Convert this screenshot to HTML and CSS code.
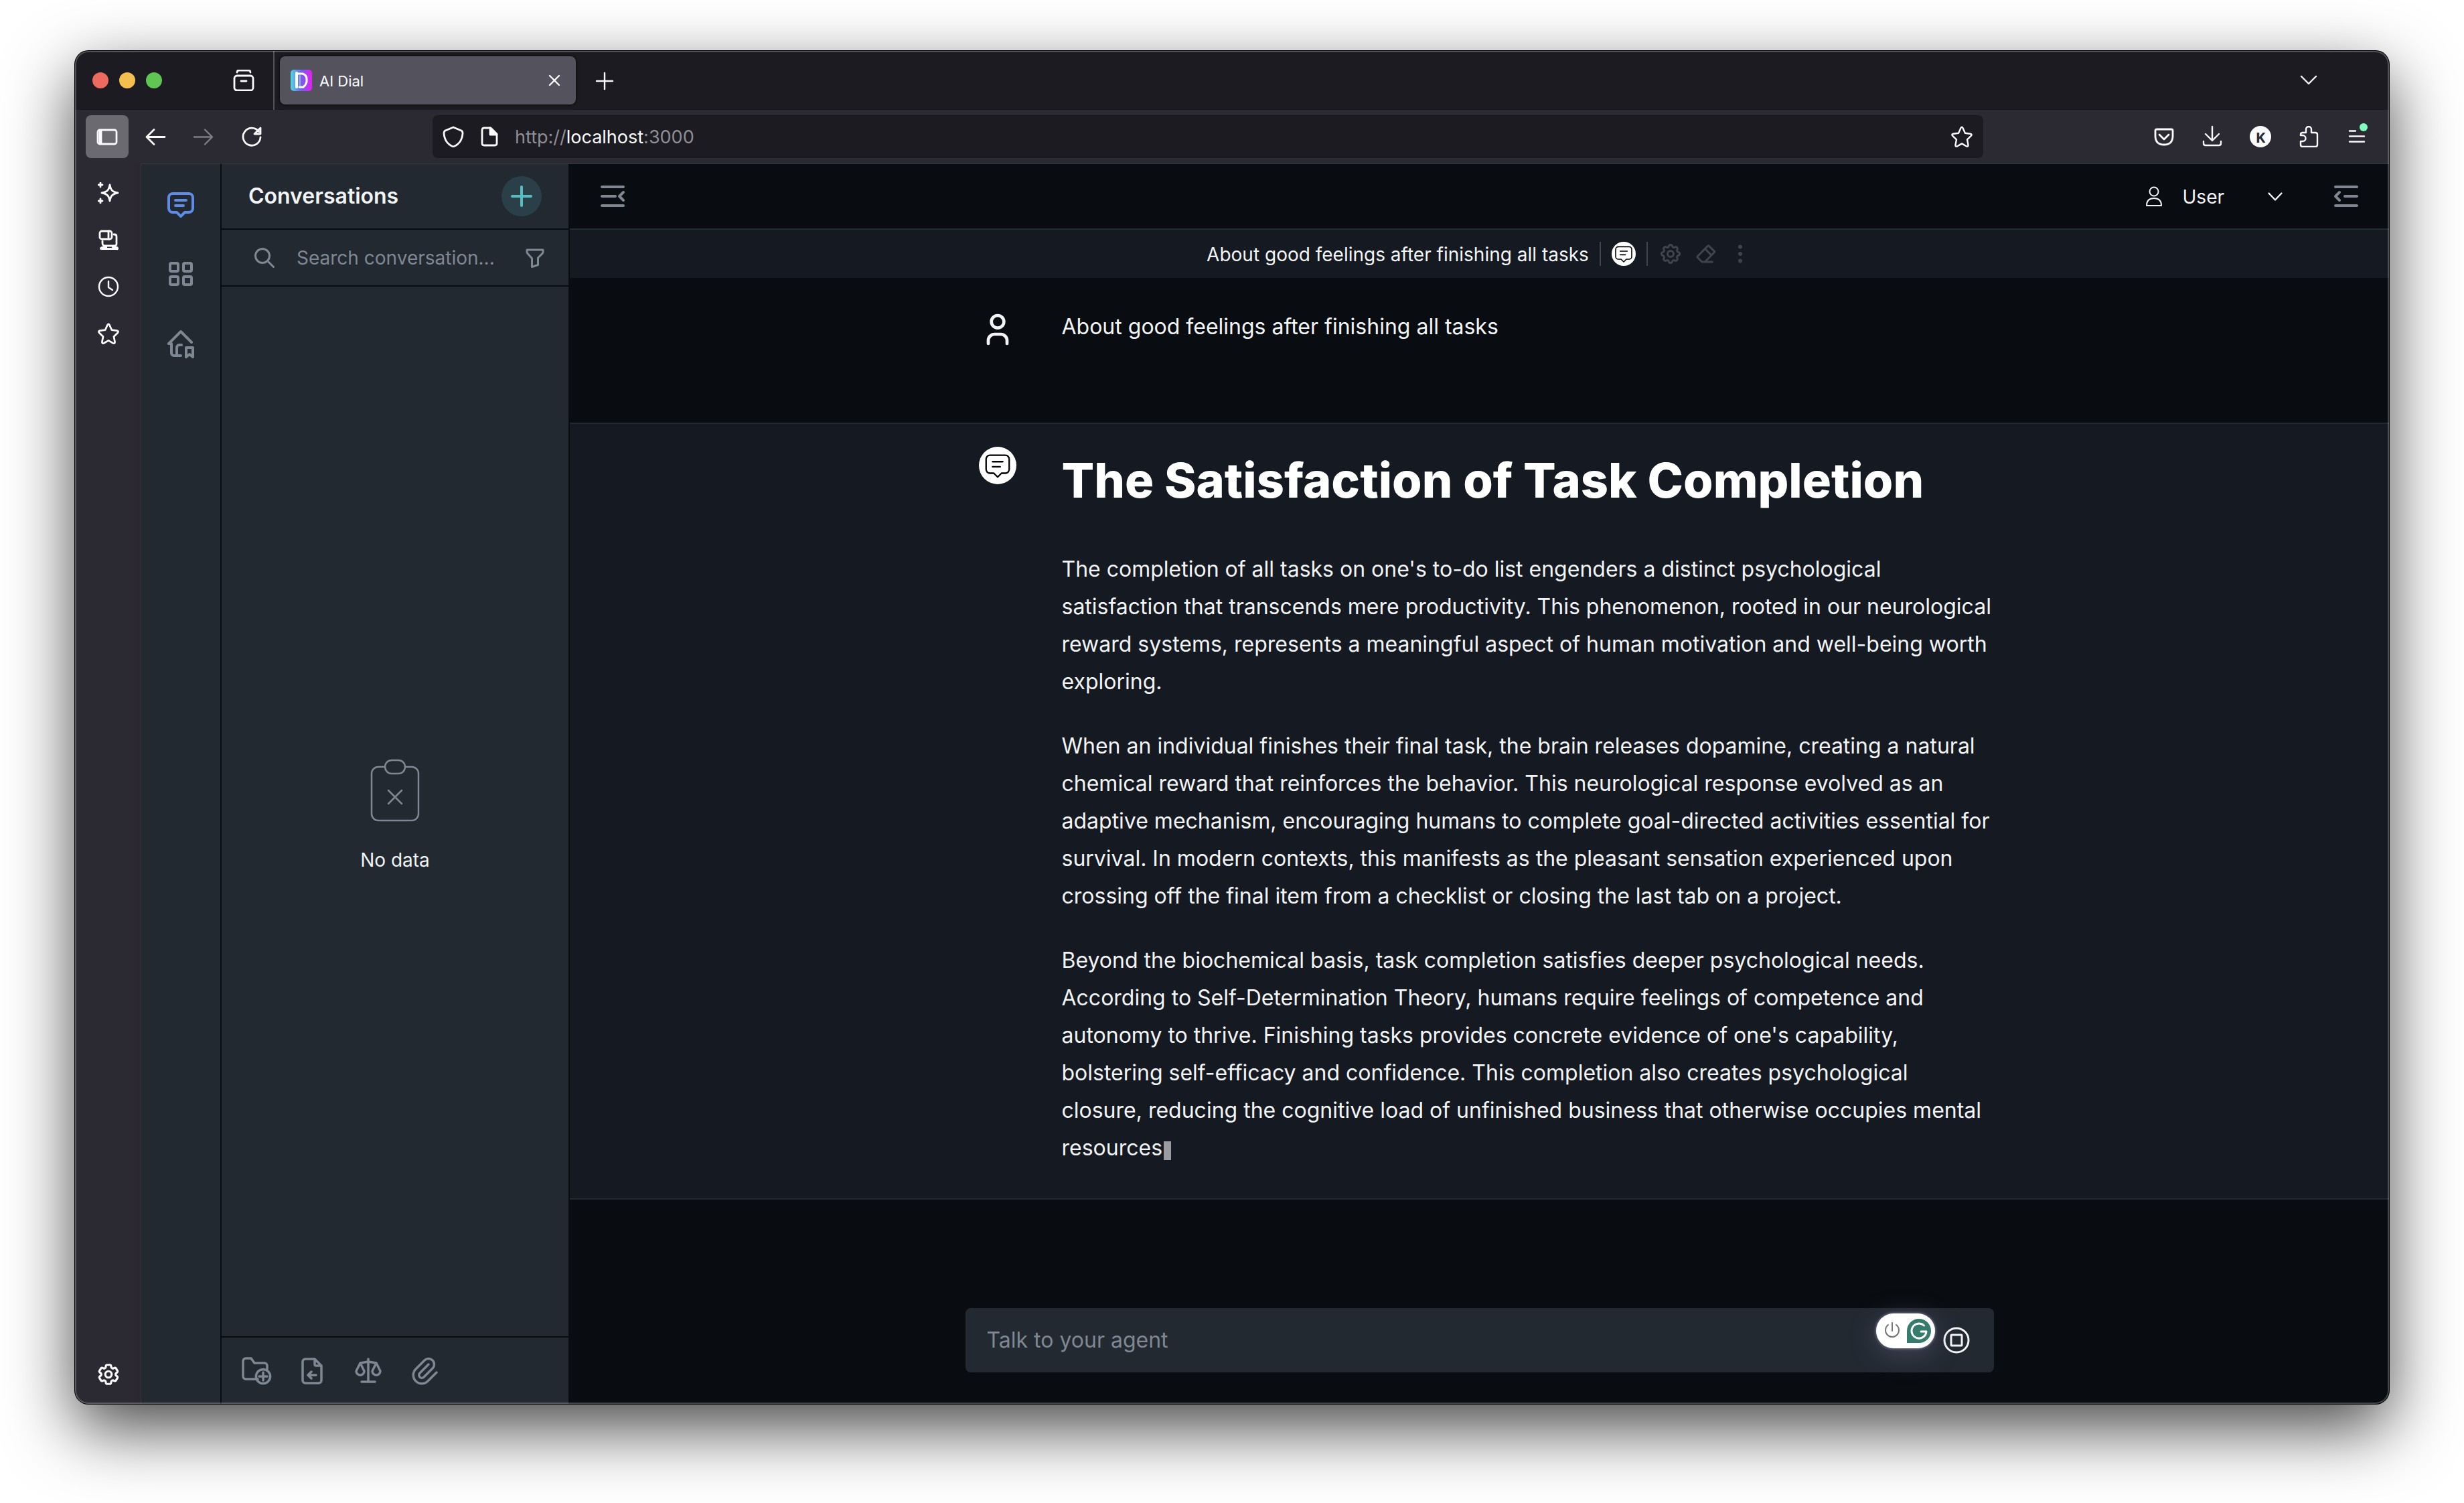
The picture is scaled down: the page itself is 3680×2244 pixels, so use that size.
FILE: index.html
```html
<!DOCTYPE html>
<html lang="en">
<head>
<meta charset="utf-8">
<title>AI Dial</title>
<link rel="stylesheet" href="styles.css">
</head>
<body>
<svg class="sprite" aria-hidden="true">
  <symbol id="message" viewBox="0 0 24 24"><path d="M8 9h8M8 13h6M9 18h-3a3 3 0 0 1-3-3v-8a3 3 0 0 1 3-3h12a3 3 0 0 1 3 3v8a3 3 0 0 1-3 3h-3l-3 3l-3-3z"/></symbol>
  <symbol id="star" viewBox="0 0 32 32"><path d="M14.4 3.3q1.6-3 3.2 0l3.3 7.4 7.8 1q3.2.8 1 3.2l-5.7 5.5 1.5 7.900q.2 3.200-2.800 2l-6.700-3.900-6.700 3.900q-3 1.200-2.800-2l1.500-7.900-5.700-5.500q-2.200-2.400 1-3.200l7.800-1z"/></symbol>
</svg>

<div class="window">
  <header class="tabstrip">
    <div class="lights"><button class="light red" aria-label="Close window"></button><button class="light amber" aria-label="Minimize"></button><button class="light green" aria-label="Zoom"></button></div>
    <button class="archive" aria-label="Recent browsing"><svg class="i32 w3" viewBox="0 0 32 32"><rect x="2" y="9" width="28" height="22" rx="4"/><path d="M6 4q0-3 3-3h14q3 0 3 3M12 17h8"/></svg></button>
    <span class="strip-line"></span>
    <div class="tab">
      <svg class="favicon" viewBox="0 0 32 32"><defs><linearGradient id="fav"><stop offset="0" stop-color="#4fd8e0"/><stop offset=".5" stop-color="#7360e8"/><stop offset="1" stop-color="#e81cf5"/></linearGradient></defs><rect width="32" height="32" rx="5" fill="url(#fav)"/><path d="M9 6h9q6 2 6 8v4q-1 5-5 8h-6" fill="none" stroke="#fff" stroke-width="3"/><path d="M9 5v21" stroke="#fff" stroke-width="4"/><path d="M14 9v15" stroke="#cdd" stroke-width="1"/></svg>
      <span class="tab-title">AI Dial</span>
      <button class="tab-close" aria-label="Close tab"><svg class="i32 w2" viewBox="0 0 32 32"><path d="M9 9l14 14M23 9l-14 14"/></svg></button>
    </div>
    <button class="new-tab" aria-label="New tab"><svg class="i32 w2" viewBox="0 0 32 32"><path d="M16 5v24M4 17h24"/></svg></button>
    <button class="all-tabs" aria-label="List all tabs"><svg class="i32 w2" viewBox="0 0 32 32"><path d="M5 10l11 11l11-11"/></svg></button>
  </header>

  <div class="toolbar">
    <div class="tools">
      <button class="tool active" aria-label="Sidebar"><svg class="i32 w3" viewBox="0 0 32 32"><rect x="2" y="6" width="28" height="21" rx="3"/><path d="M5 7v19M7 7v19"/></svg></button>
      <button class="tool" aria-label="Back"><svg class="i32 w3" viewBox="0 0 32 32"><path d="M30 16.500h-27M14 5.500l-11 11l11 11"/></svg></button>
      <button class="tool dim" aria-label="Forward"><svg class="i32 w2" viewBox="0 0 32 32"><path d="M2 16.500h27M18 5.500l11 11l-11 11"/></svg></button>
      <button class="tool" aria-label="Reload"><svg class="i32 w3" viewBox="0 0 32 32"><path d="M26.500 8.500a13 13 0 1 0 2.500 8.500M29 3v9h-9z"/></svg></button>
    </div>
    <div class="urlbar">
      <svg class="i32 w3" viewBox="0 0 32 32"><path d="M16 2l12 5q2 1 2 4-1 15-14 20-13-5-14-20 0-3 2-4z"/></svg>
      <svg class="i32 w3" viewBox="0 0 32 32"><path d="M8 3h10l9 9v14q0 3-3 3h-16q-3 0-3-3v-20q0-3 3-3z"/><path d="M17 3v10h10z" fill="currentColor"/></svg>
      <div class="address" role="textbox" aria-label="Address" contenteditable="true" spellcheck="false">http://<b>localhost</b>:3000</div>
      <button aria-label="Bookmark this page"><svg class="i32 w2"><use href="#star"/></svg></button>
    </div>
    <div class="tools">
      <button class="tool" aria-label="Save to Pocket"><svg class="i32 w3" viewBox="0 0 32 32"><path d="M5 5h22q2 0 2 2v8q0 13-13 13t-13-13v-8q0-2 2-2z M9 13l7 7l7-7"/></svg></button>
      <button class="tool" aria-label="Downloads"><svg class="i32 w2" viewBox="0 0 32 32"><path d="M16 1v20M6 12l10 10l10-10M3 23v3q0 3 3 3h20q3 0 3-3v-3"/></svg></button>
      <button class="tool" aria-label="Account"><span class="avatar">K</span></button>
      <button class="tool" aria-label="Extensions"><svg class="i32 w2" viewBox="0 0 32 32"><path d="M12 10v-5a4 4 0 0 1 8 0v5h6q3 0 3 3v15q0 3-3 3h-19q-3 0-3-3v-5h3a4.500 4.500 0 0 0 0-9h-3v-1q0-3 3-3z"/></svg></button>
      <button class="tool" aria-label="Menu"><svg class="i32 w2" viewBox="0 0 32 32"><path d="M5 7.500h9M5 15.500h22M5 23.500h22"/></svg><span class="notice"></span></button>
    </div>
  </div>

  <div class="workspace">
    <nav class="browser-side" aria-label="Browser sidebar">
      <button aria-label="AI chatbot"><svg class="i32 w3" viewBox="0 0 32 32"><path d="M18 4c1.500 8 4 10.500 12 12-8 1.500-10.500 4-12 12-1.500-8-4-10.500-12-12 8-1.500 10.500-4 12-12zM4 1v6M1 4h6M4 25v6M1 28h6"/></svg></button>
      <button aria-label="Synced tabs"><svg class="i32 w3" viewBox="0 0 32 32"><rect x="3" y="3" width="18" height="12" rx="3"/><path d="M16 3v12M24 8h1q3 0 3 3v11q0 3-3 3h-14q-4 0-4-4v-3"/><path d="M6 26h8v2h7v-2h7q3 0 3 3t-3 2h-22q-3 0-3-2t3-3z" fill="currentColor" stroke="none"/></svg></button>
      <button aria-label="History"><svg class="i32 w2" viewBox="0 0 32 32"><circle cx="16" cy="16" r="14"/><path d="M16 8v9l6 4"/></svg></button>
      <button aria-label="Bookmarks"><svg class="i32 w3"><use href="#star"/></svg></button>
      <button class="last" aria-label="Customize sidebar"><svg class="gear" viewBox="0 0 24 24"><path d="M9.594 3.940c.09-.542.56-.94 1.110-.94h2.593c.55 0 1.020.398 1.110.94l.213 1.281c.063.374.313.686.645.87.074.04.147.083.22.127.325.196.72.257 1.075.124l1.217-.456a1.125 1.125 0 0 1 1.370.49l1.296 2.247a1.125 1.125 0 0 1-.26 1.431l-1.003.827c-.293.241-.438.613-.43.992a7.723 7.723 0 0 1 0 .255c-.008.378.137.75.43.991l1.004.827c.424.35.534.955.26 1.430l-1.298 2.247a1.125 1.125 0 0 1-1.369.491l-1.217-.456c-.355-.133-.75-.072-1.076.124a6.470 6.470 0 0 1-.22.128c-.331.183-.581.495-.644.869l-.213 1.281c-.09.543-.56.94-1.110.94h-2.594c-.55 0-1.019-.398-1.110-.94l-.213-1.281c-.062-.374-.312-.686-.644-.87a6.520 6.520 0 0 1-.22-.127c-.325-.196-.72-.257-1.076-.124l-1.217.456a1.125 1.125 0 0 1-1.369-.49l-1.297-2.247a1.125 1.125 0 0 1 .26-1.431l1.004-.827c.292-.24.437-.613.43-.991a6.932 6.932 0 0 1 0-.255c.007-.38-.138-.751-.43-.992l-1.004-.827a1.125 1.125 0 0 1-.26-1.430l1.297-2.247a1.125 1.125 0 0 1 1.370-.491l1.216.456c.356.133.751.072 1.076-.124.072-.044.146-.086.22-.128.332-.183.582-.495.644-.869l.214-1.280ZM15 12a3 3 0 1 1-6 0a3 3 0 0 1 6 0Z"/></svg></button>
    </nav>

    <nav class="rail" aria-label="Application">
      <button class="current" aria-label="Chat"><svg class="i48"><use href="#message"/></svg></button>
      <button aria-label="Marketplace"><svg class="i48" viewBox="0 0 24 24"><rect x="4" y="4" width="6" height="6" rx="1"/><rect x="14" y="4" width="6" height="6" rx="1"/><rect x="4" y="14" width="6" height="6" rx="1"/><rect x="14" y="14" width="6" height="6" rx="1"/></svg></button>
      <button aria-label="My workspace"><svg class="i48" viewBox="0 0 24 24"><path d="M16 15h5v7l-2.500-2l-2.500 2zM20 11l-8-8l-9 9h2v7a2 2 0 0 0 2 2h5M9 21v-6a2 2 0 0 1 2-2h1.500"/></svg></button>
    </nav>

    <aside class="panel">
      <div class="panel-head"><h2>Conversations</h2><button class="add" aria-label="New conversation"><svg class="i48" viewBox="0 0 24 24"><path d="M12 5v14M5 12h14"/></svg></button></div>
      <div class="search">
        <svg class="i36" viewBox="0 0 24 24"><circle cx="10" cy="10" r="7"/><path d="M21 21l-6-6"/></svg>
        <input type="text" placeholder="Search conversation..." aria-label="Search conversations">
        <button aria-label="Filter"><svg class="i36" viewBox="0 0 24 24"><path d="M4 4h16v2.172a2 2 0 0 1-.586 1.414l-4.414 4.414v7l-6 2v-8.500l-4.480-4.928a2 2 0 0 1-.52-1.345z"/></svg></button>
      </div>
      <div class="empty">
        <svg viewBox="0 0 24 24"><path d="M9 5h-2a2 2 0 0 0-2 2v12a2 2 0 0 0 2 2h10a2 2 0 0 0 2-2v-12a2 2 0 0 0-2-2h-2M9 5a2 2 0 0 1 2-2h2a2 2 0 0 1 0 4h-2a2 2 0 0 1-2-2zM10 12l4 4m0-4l-4 4"/></svg>
        <span>No data</span>
      </div>
      <div class="panel-foot">
        <button aria-label="New folder"><svg class="i48" viewBox="0 0 24 24"><path d="M13.500 18h-9a2 2 0 0 1-2-2v-11.500a2 2 0 0 1 2-2h4l2.500 3.500h7.500a2 2 0 0 1 2 2v2.500M17.500 13v6M14.500 16h6"/><circle cx="17.500" cy="16" r="5.300"/></svg></button>
        <button aria-label="Import conversations"><svg class="i48" viewBox="0 0 24 24"><path d="M14 3v4a1 1 0 0 0 1 1h4M17 21h-10a2 2 0 0 1-2-2v-14a2 2 0 0 1 2-2h7l5 5v11a2 2 0 0 1-2 2zM15 15h-6M11.500 17.500l-2.500-2.500l2.500-2.500"/></svg></button>
        <button aria-label="Compare"><svg class="i48" viewBox="0 0 24 24"><path d="M7 20h10M6 6l6-1l6 1M12 3v17M9 12l-3-6l-3 6a3 3 0 0 0 6 0M21 12l-3-6l-3 6a3 3 0 0 0 6 0"/></svg></button>
        <button aria-label="Attachments"><svg class="i48" viewBox="0 0 24 24"><path d="M15 7l-6.500 6.500a1.500 1.500 0 0 0 3 3l6.500-6.500a3 3 0 0 0-6-6l-6.500 6.500a4.500 4.500 0 0 0 9 9l6.500-6.500"/></svg></button>
      </div>
    </aside>

    <main class="main">
      <div class="topbar">
        <button class="toggle" aria-label="Collapse conversations"><svg class="i48" viewBox="0 0 24 24"><path d="M4 5h16M4 12h10M4 19h16M20 9l-3 3l3 3"/></svg></button>
        <button class="user"><svg class="user-icon" viewBox="0 0 40 40"><circle cx="20" cy="13" r="6.500"/><path d="M9 34q0-11 11-11t11 11z"/></svg><span>User</span><svg class="i32 w2" viewBox="0 0 32 32"><path d="M6.500 11.500l9.500 10l9.500-10"/></svg></button>
        <button class="toggle" aria-label="Open prompts"><svg class="i48" viewBox="0 0 24 24"><path d="M4 5h16M11 12h9M4 19h16M7 9l-3 3l3 3"/></svg></button>
      </div>
      <div class="chat-head">
        <span class="chat-title">About good feelings after finishing all tasks</span>
        <span class="rule"></span>
        <span class="bot small"><svg><use href="#message"/></svg></span>
        <span class="rule"></span>
        <button disabled aria-label="Settings"><svg class="i36" viewBox="0 0 24 24"><path d="M10.325 4.317c.426-1.756 2.924-1.756 3.350 0a1.724 1.724 0 0 0 2.573 1.066c1.543-.94 3.310.826 2.370 2.370a1.724 1.724 0 0 0 1.065 2.572c1.756.426 1.756 2.924 0 3.350a1.724 1.724 0 0 0-1.066 2.573c.94 1.543-.826 3.310-2.370 2.370a1.724 1.724 0 0 0-2.572 1.065c-.426 1.756-2.924 1.756-3.350 0a1.724 1.724 0 0 0-2.573-1.066c-1.543.94-3.310-.826-2.370-2.370a1.724 1.724 0 0 0-1.065-2.572c-1.756-.426-1.756-2.924 0-3.350a1.724 1.724 0 0 0 1.066-2.573c-.94-1.543.826-3.310 2.370-2.370c1 .608 2.296.07 2.572-1.065z"/><circle cx="12" cy="12" r="3"/></svg></button>
        <button disabled aria-label="Clear conversation"><svg class="i36" viewBox="0 0 24 24"><path d="M19 20h-10.500l-4.210-4.300a1 1 0 0 1 0-1.410l10-10a1 1 0 0 1 1.410 0l5 5a1 1 0 0 1 0 1.410l-9.200 9.300M18 13.300l-6.300-6.300"/></svg></button>
        <button disabled aria-label="More"><svg class="i36" viewBox="0 0 24 24"><circle cx="12" cy="5" r="1"/><circle cx="12" cy="12" r="1"/><circle cx="12" cy="19" r="1"/></svg></button>
      </div>
      <div class="thread">
        <section class="message from-user">
          <div class="column">
            <svg class="person" viewBox="0 0 24 24"><circle cx="12" cy="7" r="4"/><path d="M6 21v-2a4 4 0 0 1 4-4h4a4 4 0 0 1 4 4v2"/></svg>
            <p>About good feelings after finishing all tasks</p>
          </div>
        </section>
        <section class="message from-bot">
          <div class="column">
            <span class="bot"><svg><use href="#message"/></svg></span>
            <article>
              <h1>The Satisfaction of Task Completion</h1>
              <p>The completion of all tasks on one's to-do list engenders a distinct psychological satisfaction that transcends mere productivity. This phenomenon, rooted in our neurological reward systems, represents a meaningful aspect of human motivation and well-being worth exploring.</p>
              <p>When an individual finishes their final task, the brain releases dopamine, creating a natural chemical reward that reinforces the behavior. This neurological response evolved as an adaptive mechanism, encouraging humans to complete goal-directed activities essential for survival. In modern contexts, this manifests as the pleasant sensation experienced upon crossing off the final item from a checklist or closing the last tab on a project.</p>
              <p>Beyond the biochemical basis, task completion satisfies deeper psychological needs. According to Self-Determination Theory, humans require feelings of competence and autonomy to thrive. Finishing tasks provides concrete evidence of one's capability, bolstering self-efficacy and confidence. This completion also creates psychological closure, reducing the cognitive load of unfinished business that otherwise occupies mental resources<span class="cursor"></span></p>
            </article>
          </div>
        </section>
      </div>
      <form class="composer">
        <input type="text" placeholder="Talk to your agent" aria-label="Message">
        <button class="stop" type="button" aria-label="Stop generating"><svg viewBox="0 0 40 40"><circle cx="20" cy="20" r="18"/><rect x="12" y="12" width="16" height="16" rx="1"/></svg></button>
        <div class="assistant">
          <svg viewBox="0 0 36 36"><path d="M12 9a10 10 0 1 0 12 0M18 6v12" fill="none" stroke="#777" stroke-width="2"/></svg>
          <svg viewBox="0 0 36 36"><path d="M18 0a18 18 0 0 1 0 36h-18v-18a18 18 0 0 1 18-18z" fill="#367c6c" stroke="none"/><path d="M25.500 10a11 11 0 1 0 3.500 9h-8" fill="none" stroke="#fff" stroke-width="3"/></svg>
        </div>
      </form>
    </main>
  </div>
</div>
</body>
</html>
```
FILE: styles.css
```css
* { box-sizing: border-box; margin: 0; }
html { background: #fff; }
body {
  display: flex;
  min-height: 100vh;
  padding: 76px 112px 148px;
  font-family: Inter, "Liberation Sans", sans-serif;
  font-size: 28px;
  line-height: 40px;
  color: #f3f4f6;
  overflow: hidden;
}
button {
  display: inline-flex;
  align-items: center;
  justify-content: center;
  padding: 0;
  border: 0;
  background: none;
  color: inherit;
  font: inherit;
}
input {
  flex: 1;
  min-width: 0;
  padding: 0;
  border: 0;
  outline: 0;
  background: none;
  color: #f3f4f6;
  font: inherit;
  text-overflow: ellipsis;
}
input::placeholder { color: #7f8792; opacity: 1; }
svg {
  display: block;
  flex: none;
  fill: none;
  stroke: currentColor;
  stroke-width: 2;
  stroke-linecap: round;
  stroke-linejoin: round;
}
.sprite { position: absolute; width: 0; height: 0; }
.i32 { width: 32px; height: 32px; }
.i36 { width: 36px; height: 36px; }
.i48 { width: 48px; height: 48px; }
.w2 { stroke-width: 2.4; }
.w3 { stroke-width: 2.8; }

/* Browser window */
.window {
  position: relative;
  flex: 1;
  min-width: 0;
  display: flex;
  flex-direction: column;
  border-radius: 20px;
  background: #090d11;
  box-shadow: 0 0 0 1px #000, 0 36px 100px rgba(0, 0, 0, .73);
  overflow: hidden;
}
.window::after {
  content: "";
  position: absolute;
  inset: 0;
  border: 2px solid rgba(255, 255, 255, .24);
  border-radius: 20px;
  pointer-events: none;
}
.tabstrip {
  display: flex;
  align-items: center;
  height: 88px;
  padding-left: 26px;
  background: #1c1b22;
  color: #fbfbfe;
}
.lights { display: flex; gap: 16px; }
.light { width: 24px; height: 24px; border-radius: 50%; }
.red { background: #ed6a5f; }
.amber { background: #f5bf4f; }
.green { background: #61c554; }
.archive { margin: 0 28px 0 106px; }
.strip-line { width: 2px; height: 88px; background: #53525b; }
.tab {
  display: flex;
  align-items: center;
  width: 442px;
  height: 72px;
  margin: 0 27px 0 8px;
  padding: 0 16px;
  border-radius: 8px;
  background: #53525d;
  box-shadow: 0 0 4px #000;
}
.favicon { width: 32px; height: 32px; stroke: none; }
.tab-title { flex: 1; padding: 2px 0 0 11px; font-size: 22px; }
.all-tabs { margin: 0 104px 0 auto; }

.toolbar {
  display: flex;
  align-items: center;
  height: 80px;
  padding: 0 16px;
  background: #2b2a33;
  color: #fbfbfe;
}
.tools { display: flex; gap: 8px; }
.tool { position: relative; width: 64px; height: 64px; border-radius: 8px; }
.tool.active { background: #6b6a70; }
.tool.dim { color: #7e7d84; }
.avatar {
  width: 32px;
  height: 32px;
  border-radius: 50%;
  background: #fbfbfe;
  color: #2b2a33;
  font: bold 22px/32px "Open Sans", sans-serif;
}
.notice {
  position: absolute;
  top: 12px;
  right: 16px;
  width: 12px;
  height: 12px;
  border-radius: 50%;
  background: #80ffc0;
}
.urlbar {
  flex: 1;
  display: flex;
  align-items: center;
  gap: 22px;
  height: 64px;
  margin: 0 238px;
  padding: 0 16px 0 15px;
  border-radius: 8px;
  background: #1c1b22;
}
.address { flex: 1; padding-top: 2px; color: #8f8e96; font-size: 27px; }
.address b { color: #fbfbfe; font-weight: 400; }

.workspace { flex: 1; display: flex; min-height: 0; }
.browser-side {
  display: flex;
  flex-direction: column;
  gap: 6px;
  width: 98px;
  padding: 12px 0 12px 2px;
  background: linear-gradient(90deg, #2b2a33 80%, #2a282d);
  color: #fbfbfe;
}
.browser-side button { height: 64px; }
.browser-side .last { margin-top: auto; }
.gear { width: 38px; height: 38px; }
.rail, .panel, .main { border-top: 1px solid #38373f; }
.rail {
  display: flex;
  flex-direction: column;
  gap: 16px;
  width: 121px;
  padding-top: 16px;
  border-left: 1px solid #38373f;
  border-right: 2px solid #090d11;
  background: #222931;
  color: #7f8792;
}
.rail button { height: 88px; }
.rail .current { color: #5f8ce6; }

/* Conversations panel */
.panel {
  display: flex;
  flex-direction: column;
  width: 518px;
  background: #222931;
}
.panel-head {
  display: flex;
  align-items: center;
  justify-content: space-between;
  height: 98px;
  padding: 0 40px;
  border-bottom: 2px solid #090d11;
}
h2 { font-size: 32px; font-weight: 600; }
.add {
  width: 60px;
  height: 60px;
  border-radius: 50%;
  background: #2a3f48;
  color: #55bfc4;
}
.search {
  display: flex;
  align-items: center;
  height: 85px;
  padding: 0 32px 0 46px;
  gap: 30px;
  border-bottom: 2px solid #090d11;
  color: #7f8792;
}
.empty {
  flex: 1;
  display: flex;
  flex-direction: column;
  align-items: center;
  justify-content: center;
  gap: 24px;
}
.empty svg {
  width: 120px;
  height: 120px;
  stroke: #7f8792;
  stroke-width: .5;
}
.panel-foot {
  display: flex;
  align-items: center;
  gap: 36px;
  height: 101px;
  padding: 0 27px;
  border-top: 2px solid #090d11;
  color: #7f8792;
}
.panel-foot svg { stroke-width: 1.75; }

/* Chat */
.main {
  flex: 1;
  min-width: 0;
  display: flex;
  flex-direction: column;
  padding-left: 2px;
  background: #090d11;
}
.topbar {
  display: flex;
  align-items: center;
  height: 98px;
  padding: 0 40px;
  border-bottom: 2px solid #222931;
}
.toggle { color: #7f8792; }
.user { margin: 0 66px 0 auto; }
.user span { margin: 0 60px 0 23px; padding-top: 1px; }
.user-icon { width: 40px; height: 40px; }
.chat-head {
  display: flex;
  align-items: center;
  justify-content: center;
  gap: 16px;
  height: 72px;
  background: #151921;
}
.chat-title { padding-top: 1px; }
.chat-head button { color: #3f444d; }
.rule { width: 2px; height: 36px; background: #3f444d; }
.bot {
  display: flex;
  align-items: center;
  justify-content: center;
  width: 56px;
  height: 56px;
  border-radius: 50%;
  background: #fff;
  color: #000;
}
.bot svg { width: 46px; height: 46px; stroke-width: 1.2; }
.bot.small { width: 36px; height: 36px; }
.bot.small svg { width: 32px; height: 32px; }
.thread { flex: 1; }
.column {
  display: grid;
  grid-template-columns: 56px 1fr;
  column-gap: 68px;
  align-items: start;
  max-width: 1536px;
  margin: 0 auto;
  padding-left: 20px;
  font-size: 32px;
  line-height: 56px;
}
.from-user { padding: 45px 0 111px; }
.person { width: 56px; height: 60px; padding-top: 4px; }
.from-bot {
  padding: 34px 0 47px;
  border: solid #222931;
  border-width: 2px 0;
  background: #151921;
}
article { padding-top: 10px; }
h1 {
  margin-bottom: 65px;
  color: #fff;
  font-size: 72px;
  font-weight: 800;
  line-height: 80px;
}
article p + p { margin-top: 40px; }
.cursor {
  display: inline-block;
  width: 11px;
  height: 28px;
  margin-left: 2px;
  background: #9a9ca1;
  vertical-align: -7px;
}
.composer {
  position: relative;
  display: flex;
  align-items: center;
  align-self: center;
  width: 100%;
  max-width: 1536px;
  height: 96px;
  margin-bottom: 47px;
  padding: 0 36px 0 32px;
  border-radius: 8px;
  background: #222931;
  font-size: 32px;
}
.stop svg { width: 40px; height: 40px; stroke-width: 3; }
.assistant {
  position: absolute;
  top: 8px;
  right: 88px;
  display: flex;
  align-items: center;
  gap: 4px;
  width: 88px;
  height: 52px;
  padding: 0 6px;
  border-radius: 26px;
  background: #fff;
  box-shadow: 0 0 4px #9a98b8, 0 8px 40px rgba(120, 115, 150, .4);
}
.assistant svg { width: 36px; height: 36px; }
```
